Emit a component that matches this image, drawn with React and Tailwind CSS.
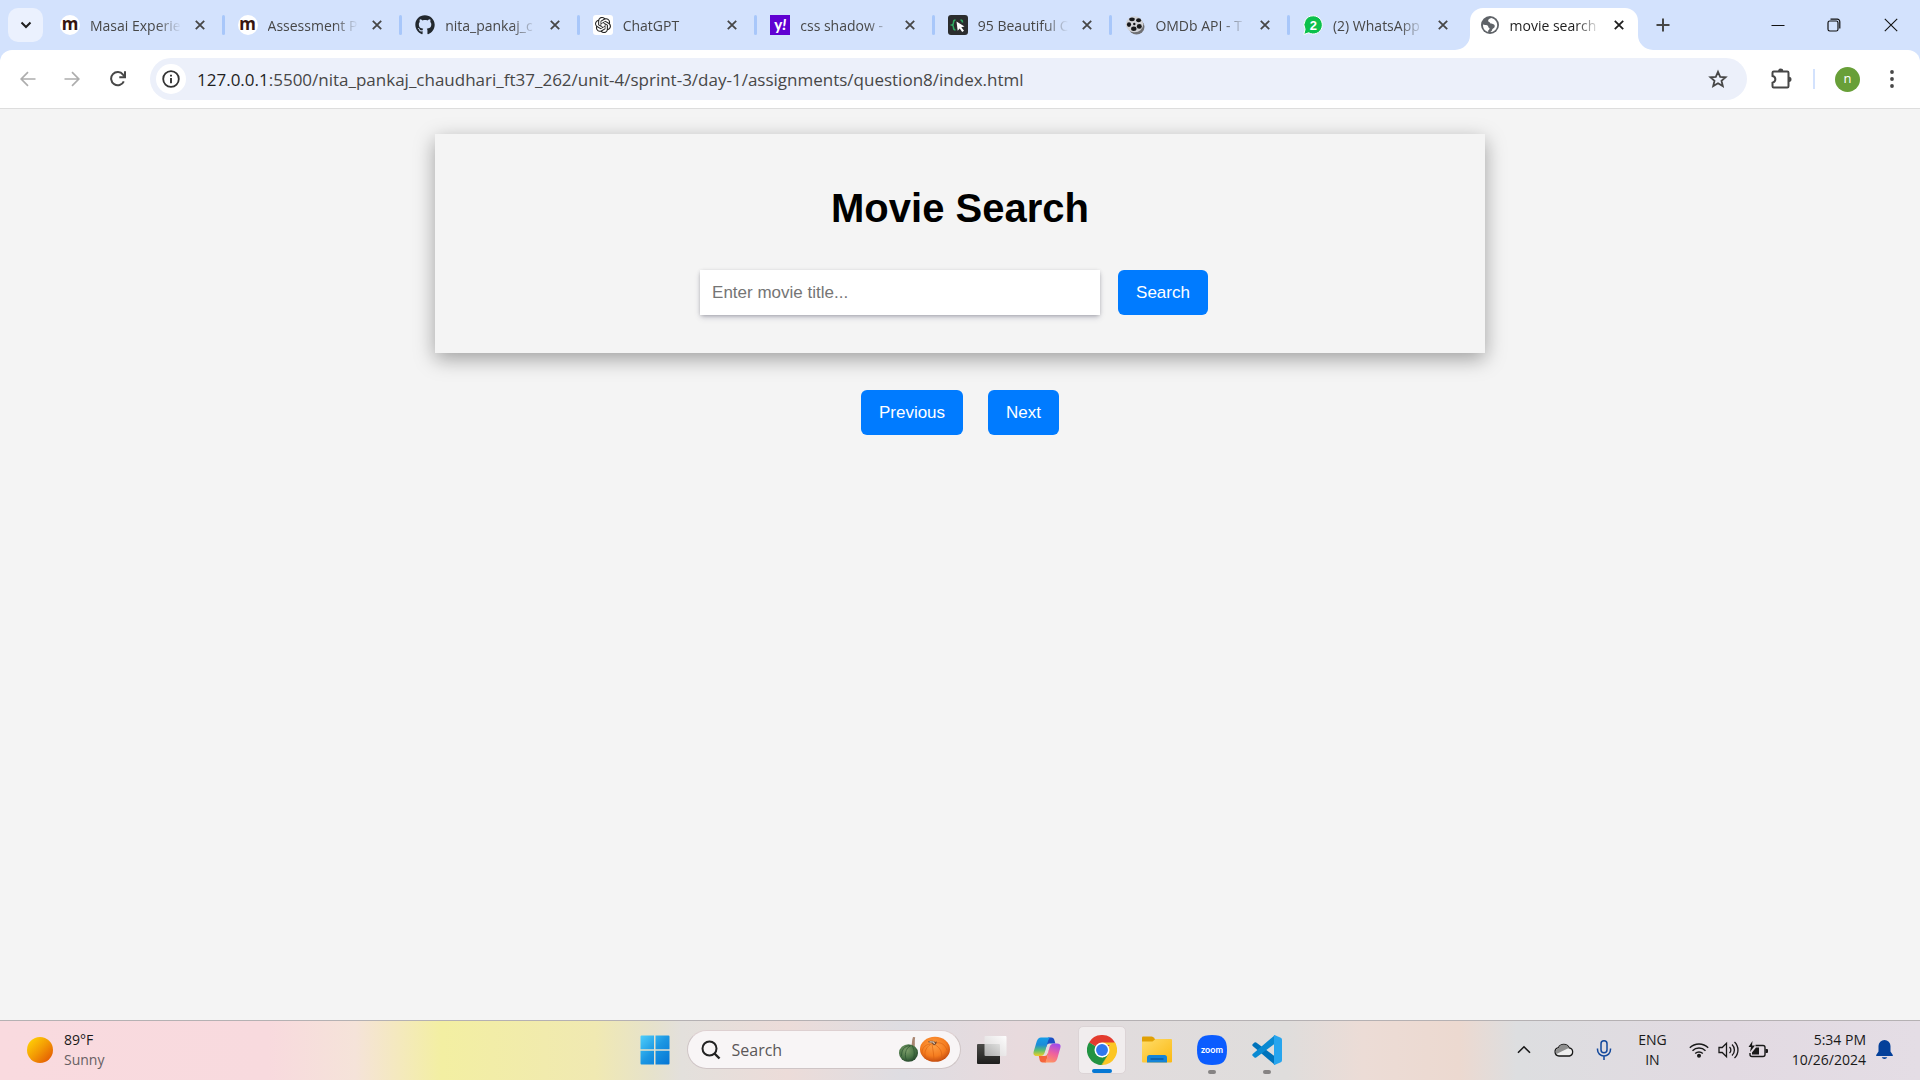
import React from "react";
import { FaGithub } from "react-icons/fa";
import { SiOpenai } from "react-icons/si";

function MasaiIcon() {
  return (
    <span className="flex h-5 w-5 items-center justify-center rounded-full bg-white font-['Noto_Sans',sans-serif] text-[17px] leading-[14px] font-bold text-[#36150f]">
      <span className="pb-[3px]">m</span>
    </span>
  );
}

function YahooIcon() {
  return (
    <span className="flex h-5 w-5 items-center justify-center bg-[#6001d2] font-['Lato',sans-serif] text-[15px] leading-5 font-black text-white">
      <span className="pb-0.5">y<i>!</i></span>
    </span>
  );
}

function BracesIcon() {
  return (
    <svg viewBox="0 0 20 20" className="h-5 w-5">
      <rect width="20" height="20" rx="3" fill="#2b2d2e" />
      <path d="M7.500 5C5.500 5 5.500 6 5.500 7.500S5.500 9.500 4 10c1.500.500 1.500 1 1.500 2.500S5.500 15 7.500 15M12.500 5c2 0 2 1 2 2.500" fill="none" stroke="#2fae62" strokeWidth="1.500" />
      <path d="M8.500 6.500l8 5-3.200.8 2.700 3.500-1.800 1.200-2.500-3.500-2 2.300z" fill="#fff" />
    </svg>
  );
}

function ReelIcon() {
  return (
    <svg viewBox="0 0 20 20" className="h-5 w-5">
      <ellipse cx="11.500" cy="11.800" rx="8" ry="7.600" fill="#6f7074" />
      <ellipse cx="9.500" cy="9.300" rx="8.800" ry="8" fill="#d2d3d7" />
      <g fill="#17181a">
        <ellipse cx="7" cy="4.300" rx="2.800" ry="1.900" />
        <ellipse cx="13.600" cy="5.300" rx="2.500" ry="2" />
        <ellipse cx="4" cy="9.600" rx="2.100" ry="2.400" />
        <ellipse cx="14.300" cy="11.400" rx="2.500" ry="2.400" />
        <ellipse cx="8.800" cy="13.800" rx="2.700" ry="2.200" />
        <circle cx="9.300" cy="9" r="1.200" />
      </g>
    </svg>
  );
}

function WhatsAppIcon() {
  return (
    <svg viewBox="0 0 20 20" className="h-5 w-5">
      <path d="M10.300.8a9.100 9.100 0 1 1-4.600 17L.8 19.500l1.300-5.200A9.100 9.100 0 0 1 10.300.8z" fill="#0bc04c" stroke="#fff" strokeWidth="1" />
      <text x="10.300" y="14.800" textAnchor="middle" fontFamily="Liberation Sans, sans-serif" fontWeight="700" fontSize="13" fill="#fff">2</text>
    </svg>
  );
}

function GlobeIcon() {
  return (
    <svg viewBox="0 0 20 20" className="h-5 w-5">
      <circle cx="10" cy="10" r="9" fill="#5f6368" />
      <path d="M11.500 3c-2.500.500-3.500 1.600-3.300 2.900.2 1.200 1.800.8 2 2.100.2 1 1.700.6 2.700.9 1.800.5 2.200 2 1.600 3.300-.7 1.400-2.300 1.300-2.500 2.700-.2 1-.8 1.800-2 2.100 3.900.4 7.200-2.700 7.200-7 0-3.300-2.300-6-5.700-7zM3 9.500c1.200.6 3 .2 4.500 1 1 .6.500 2 1.500 2.300.9.300.8 1.600-.2 2.100-.7.300-.7 1.200-.6 2C5 16.200 2.800 13.500 3 9.500z" fill="#fff" />
    </svg>
  );
}

function GithubIcon() {
  return <FaGithub className="h-5 w-5 text-[#22282e]" />;
}

function ChatIcon() {
  return (
    <span className="flex h-5 w-5 items-center justify-center rounded-[3px] bg-white">
      <SiOpenai className="h-4 w-4 text-[#222]" />
    </span>
  );
}

const tabs = [
  { title: "Masai Experie", Icon: MasaiIcon },
  { title: "Assessment P", Icon: MasaiIcon },
  { title: "nita_pankaj_c", Icon: GithubIcon },
  { title: "ChatGPT", Icon: ChatIcon },
  { title: "css shadow -", Icon: YahooIcon },
  { title: "95 Beautiful C", Icon: BracesIcon },
  { title: "OMDb API - T", Icon: ReelIcon },
  { title: "(2) WhatsApp", Icon: WhatsAppIcon, last: true },
  { title: "movie search", Icon: GlobeIcon, active: true },
];

function Cross({ className }) {
  return (
    <svg viewBox="0 0 10 10" className={className} fill="none" stroke="currentColor" strokeWidth="1.800">
      <path d="M.8.800l8.400 8.400M9.200.800L.8 9.200" />
    </svg>
  );
}

function Tab({ title, Icon, active, last }) {
  return (
    <div className="relative flex h-full min-w-0 flex-1 items-center pt-2 pb-2">
      {active && (
        <div className="absolute top-2 right-[7px] bottom-0 left-0.5 rounded-t-[13px] bg-white">
          <svg viewBox="0 0 15 15" className="absolute bottom-0 -left-[15px] h-[15px] w-[15px]">
            <path d="M15 0v15H0A15 15 0 0 0 15 0z" fill="#fff" />
          </svg>
          <svg viewBox="0 0 15 15" className="absolute -right-[15px] bottom-0 h-[15px] w-[15px]">
            <path d="M0 0v15h15A15 15 0 0 1 0 0z" fill="#fff" />
          </svg>
        </div>
      )}
      <a href="#" className={`relative flex min-w-0 flex-1 items-center gap-[10px] ${active ? "ml-3 text-[#1f1f1f]" : "ml-[13px] text-[#474747]"}`}>
        <span className="shrink-0"><Icon /></span>
        <span className="flex-1 overflow-hidden pt-0.5 text-[14px] leading-6 whitespace-nowrap [mask-image:linear-gradient(to_right,black_72%,transparent_98%)]">
          {title}
        </span>
      </a>
      <button aria-label={`Close ${title}`} className={`relative ml-2 flex h-[18px] w-[18px] shrink-0 items-center justify-center ${active ? "mr-[14px] text-[#1f1f1f]" : "mr-[13px] text-[#474747]"}`}>
        <Cross className="h-[10px] w-[10px]" />
      </button>
      <span className={`h-5 w-[3px] shrink-0 rounded-full ${active || last ? "" : "bg-[#a8c7fa]"}`} />
    </div>
  );
}

function TabStrip() {
  return (
    <div className="flex h-[50px] items-center bg-[#d3e2fd]">
      <button aria-label="Search tabs" className="mr-1 ml-2 flex h-[34px] w-[35px] shrink-0 items-center justify-center rounded-[10px] bg-[#ebf1fe]">
        <svg viewBox="0 0 12 8" className="h-2 w-3" fill="none" stroke="#1f1f1f" strokeWidth="2">
          <path d="M1.500 1.500L6 6l4.500-4.500" />
        </svg>
      </button>
      <nav className="flex h-full max-w-[1598px] min-w-0 flex-1">
        {tabs.map((t, i) => <Tab key={i} {...t} />)}
      </nav>
      <button aria-label="New tab" className="ml-1 flex h-7 w-7 shrink-0 items-center justify-center text-[#474747]">
        <svg viewBox="0 0 14 14" className="h-[14px] w-[14px]" stroke="currentColor" strokeWidth="2">
          <path d="M7 .5v13M.5 7h13" />
        </svg>
      </button>
      <div className="ml-auto flex shrink-0 items-center">
        <button aria-label="Minimize" className="flex h-10 w-14 items-center justify-center">
          <svg viewBox="0 0 14 14" className="h-[14px] w-[14px]" stroke="#111" strokeWidth="1"><path d="M.5 7.500h13" /></svg>
        </button>
        <button aria-label="Restore" className="flex h-10 w-14 items-center justify-center">
          <svg viewBox="0 0 14 14" className="h-[14px] w-[14px]" fill="none" stroke="#111" strokeWidth="1.200">
            <rect x="1" y="3" width="10" height="10" rx="1.800" />
            <path d="M3.500 1.200h6.800a2.500 2.500 0 0 1 2.500 2.500v6.800" />
          </svg>
        </button>
        <button aria-label="Close window" className="flex h-10 w-[58px] items-center justify-center">
          <svg viewBox="0 0 14 14" className="h-[14px] w-[14px]" stroke="#111" strokeWidth="1.100"><path d="M.8.800l12.400 12.400M13.200.800L.8 13.200" /></svg>
        </button>
      </div>
    </div>
  );
}

function Toolbar() {
  return (
    <div className="bg-[#d3e2fd]">
      <div className="flex h-[59px] items-center rounded-t-[12px] border-b border-[#dddddd] bg-white">
        <button aria-label="Back" className="ml-[10px] flex h-9 w-9 shrink-0 items-center justify-center">
          <svg viewBox="0 0 16 16" className="h-4 w-4" fill="none" stroke="#adadad" strokeWidth="1.700"><path d="M15.500 8H1.500M8 1.200L1.200 8 8 14.800" /></svg>
        </button>
        <button aria-label="Forward" className="ml-2 flex h-9 w-9 shrink-0 items-center justify-center">
          <svg viewBox="0 0 16 16" className="h-4 w-4" fill="none" stroke="#adadad" strokeWidth="1.700"><path d="M.5 8h14M8 1.200L14.800 8 8 14.800" /></svg>
        </button>
        <button aria-label="Reload" className="ml-[10px] flex h-9 w-9 shrink-0 items-center justify-center">
          <svg viewBox="0 0 16 16" className="h-4 w-4" fill="none" stroke="#474747" strokeWidth="2">
            <path d="M13.800 10.300A6.600 6.600 0 1 1 13 3.700l2 2.300" />
            <path d="M15 .3v5.900H9.300" />
          </svg>
        </button>
        <div className="ml-[14px] flex h-[42px] min-w-0 flex-1 items-center rounded-full bg-[#ecf0fa]">
          <button aria-label="Site information" className="ml-1.5 flex h-[30px] w-[30px] shrink-0 items-center justify-center rounded-full bg-white">
            <svg viewBox="0 0 18 18" className="h-[18px] w-[18px]" fill="none" stroke="#333" strokeWidth="1.800">
              <circle cx="9" cy="9" r="7.800" />
              <path d="M9 8v5.200M9 4.700v1.900" strokeWidth="1.900" />
            </svg>
          </button>
          <p className="ml-[11px] min-w-0 flex-1 overflow-hidden pt-0.5 text-[17px] leading-6 whitespace-nowrap text-[#474747]">
            <span className="text-[#1f1f1f]">127.0.0.1</span>:5500/nita_pankaj_chaudhari_ft37_262/unit-4/sprint-3/day-1/assignments/question8/index.html
          </p>
          <button aria-label="Bookmark this tab" className="mr-[17px] flex h-6 w-6 shrink-0 items-center justify-center">
            <svg viewBox="0 0 20 20" className="h-5 w-5" fill="none" stroke="#474747" strokeWidth="1.800">
              <path d="M10 2.800l2.200 5 5.400.5-4.100 3.500 1.300 5.300-4.800-2.900-4.800 2.900 1.300-5.300-4.100-3.500 5.400-.5z" />
            </svg>
          </button>
        </div>
        <button aria-label="Extensions" className="ml-[22px] flex h-6 w-6 shrink-0 items-center justify-center">
          <svg viewBox="0 0 22 22" className="h-[22px] w-[22px]">
            <path d="M3.700 3.500h13.600q1.200 0 1.200 1.200v13.600q0 1.200-1.200 1.200H3.700q-1.200 0-1.200-1.200v-3.600c3.800-1 3.800-5.700 0-6.700V4.700q0-1.200 1.200-1.200z" fill="none" stroke="#474747" strokeWidth="2" />
            <path d="M8 3a2.600 2.400 0 0 1 5.200 0zM19 8.700a2.500 2.600 0 0 1 0 5.200z" fill="#474747" />
          </svg>
        </button>
        <span className="mx-5 h-5 w-0.5 shrink-0 bg-[#d3e2fd]" />
        <button aria-label="Profile" className="flex h-[25px] w-[25px] shrink-0 items-center justify-center rounded-full bg-[#689f38] pb-0.5 text-[13px] leading-4 text-white">n</button>
        <button aria-label="Menu" className="mr-4 ml-5 flex h-6 w-6 shrink-0 items-center justify-center">
          <svg viewBox="0 0 4 18" className="h-[18px] w-1" fill="#474747">
            <circle cx="2" cy="2" r="1.900" /><circle cx="2" cy="9" r="1.900" /><circle cx="2" cy="16" r="1.900" />
          </svg>
        </button>
      </div>
    </div>
  );
}

function ActionButton({ children, type = "button" }) {
  return (
    <button type={type} className="h-[45px] rounded-[6px] bg-[#007bff] px-[18px] text-[17px] leading-5 text-white">
      {children}
    </button>
  );
}

function MoviePage() {
  return (
    <main className="flex-1 bg-[#f4f4f4] pt-[25px] font-['Liberation_Sans',Arial,sans-serif]">
      <section className="mx-auto max-w-[1050px] px-6 pt-[51px] pb-[38px] shadow-[0_6px_19px_rgba(0,0,0,0.35)]">
        <h1 className="text-center text-[40px] leading-[46px] font-bold text-black">Movie Search</h1>
        <form className="mt-[39px] mr-3 flex items-center justify-center gap-[18px]" onSubmit={(e) => e.preventDefault()}>
          <input
            type="text"
            aria-label="Movie title"
            placeholder="Enter movie title..."
            className="h-[45px] w-[400px] bg-white px-3 text-[17px] leading-5 text-black shadow-[0_3px_6px_-1px_rgba(50,50,93,0.25),0_1px_4px_-1px_rgba(0,0,0,0.3)] outline-none placeholder:text-[#757575]"
          />
          <ActionButton type="submit">Search</ActionButton>
        </form>
      </section>
      <div className="mt-[37px] flex justify-center gap-[25px]">
        <ActionButton>Previous</ActionButton>
        <ActionButton>Next</ActionButton>
      </div>
    </main>
  );
}

function WindowsLogo() {
  return (
    <svg viewBox="0 0 30 30" className="h-[30px] w-[30px]">
      <defs>
        <linearGradient id="win" x1="0" y1="0" x2="30" y2="30" gradientUnits="userSpaceOnUse">
          <stop offset="0" stopColor="#4fd0fb" /><stop offset=".5" stopColor="#1b96e2" /><stop offset="1" stopColor="#0474d4" />
        </linearGradient>
      </defs>
      <path d="M1.500.5H14v13.700H.5V1.500q0-1 1-1zM15.500.5h13q1 0 1 1v12.700h-14zM.5 15.700H14v13.800H1.500q-1 0-1-1zM15.500 15.700h14v12.800q0 1-1 1h-13z" fill="url(#win)" />
    </svg>
  );
}

function Pumpkins() {
  return (
    <svg viewBox="0 0 52 28" className="h-7 w-[52px]">
      <defs>
        <radialGradient id="green" cx=".4" cy=".35" r=".7"><stop offset="0" stopColor="#7fa06c" /><stop offset=".6" stopColor="#4a7446" /><stop offset="1" stopColor="#24432a" /></radialGradient>
        <radialGradient id="orange" cx=".45" cy=".35" r=".7"><stop offset="0" stopColor="#ffa145" /><stop offset=".6" stopColor="#f57c1f" /><stop offset="1" stopColor="#bb420b" /></radialGradient>
      </defs>
      <path d="M13 10.500c1.500-3 .5-6 2-9.500l2.200.3c-.8 3.500 0 6.500-.5 9.700z" fill="#a98672" />
      <ellipse cx="10.500" cy="17" rx="9.500" ry="8.800" fill="url(#green)" />
      <path d="M13 9.500c-6 3-7 10-4 16M14 9.500c3 5 3 11 0 15.500M12 9.500C6 10 3.500 14 3.500 20" fill="none" stroke="#2b5230" strokeWidth=".7" />
      <ellipse cx="37" cy="13.300" rx="15" ry="12.500" fill="url(#orange)" />
      <path d="M33 8c-6 4-8 10-4 16M34 8c1 6 2 12 2 17.500M36 8c7 4 9 9 7 16M32 8c-6 1-8 5-8 9M38 7c6-1 9 2 11 7" fill="none" stroke="#d9600f" strokeWidth=".6" />
      <path d="M30 6c2-2 6-1 7 0l2-.5-1 2.500-2 1.500-2-2z" fill="#75472b" /><path d="M31.500 5.800l4 .2 1 2" stroke="#e2cfba" strokeWidth="1.200" fill="none" />
    </svg>
  );
}

function TaskViewIcon() {
  return (
    <svg viewBox="0 0 30 28" className="h-7 w-[30px]">
      <defs>
        <linearGradient id="dark" x1="0" y1="0" x2="0" y2="1"><stop offset="0" stopColor="#4b4b48" /><stop offset="1" stopColor="#1e1e1d" /></linearGradient>
        <linearGradient id="light" x1="1" y1="0" x2="0" y2="1"><stop offset="0" stopColor="#fff" stopOpacity=".95" /><stop offset="1" stopColor="#d8d8d8" stopOpacity=".75" /></linearGradient>
      </defs>
      <rect x="0" y="8" width="23" height="20" rx="1" fill="url(#dark)" />
      <rect x="7.500" y="0" width="22" height="20" rx="1" fill="url(#light)" />
    </svg>
  );
}

function CopilotIcon() {
  return (
    <svg viewBox="0 0 28 26" className="h-[26px] w-7">
      <defs>
        <linearGradient id="cpa" x1="0" y1="0" x2="0" y2="1"><stop offset="0" stopColor="#159de8" /><stop offset=".4" stopColor="#1c8cd8" /><stop offset=".7" stopColor="#5fbf6e" /><stop offset="1" stopColor="#f2cf25" /></linearGradient>
        <linearGradient id="cpb" x1=".6" y1="0" x2=".3" y2="1"><stop offset="0" stopColor="#a44be8" /><stop offset=".5" stopColor="#f0629d" /><stop offset="1" stopColor="#ff9560" /></linearGradient>
      </defs>
      <path d="M15 .5h3.500q2 0 2.700 2l1.200 4h-6q-2 0-2.700 2l-2 6z" fill="#1c4fc4" />
      <path d="M13 25.500H9.500q-2 0-2.700-2l-1-4.500h6q2 0 2.700-2l2-6z" fill="#f5653b" />
      <path d="M8 .5h10q-2 0-2.800 3l-3.500 12q-1 3.500-4.500 3.500H4q-4.500 0-3.300-4.500l3-10Q5 .5 8 .5z" fill="url(#cpa)" />
      <path d="M20 25.500H11q1.800 0 2.600-3l3-12.500q1-3.500 4.500-3.500H24q4.500 0 3.300 4.500l-3 10.500q-1.200 4-4.300 4z" fill="url(#cpb)" />
    </svg>
  );
}

function ChromeIcon() {
  return (
    <svg viewBox="0 0 48 48" className="h-[30px] w-[30px]">
      <path d="M24 24L3.200 12A24 24 0 0 1 44.800 12z" fill="#e33b2e" />
      <path d="M24 24L44.800 12A24 24 0 0 1 24 48z" fill="#fcc624" />
      <path d="M24 24L24 48A24 24 0 0 1 3.200 12z" fill="#229342" />
      <path d="M24 12h20.800a24 24 0 0 1 1.700 4H30z" fill="#fcc624" />
      <path d="M13.600 30L3.200 12l10 7z" fill="#229342" />
      <path d="M34.400 30L24 48a24 24 0 0 1-6-.8L26 34z" fill="#229342" />
      <path d="M34.400 30L24 48h-1z" fill="#fcc624" />
      <circle cx="24" cy="24" r="12" fill="#fff" />
      <circle cx="24" cy="24" r="9.500" fill="#3078ed" />
    </svg>
  );
}

function FolderIcon() {
  return (
    <svg viewBox="0 0 30 27" className="h-[27px] w-[30px]">
      <defs>
        <linearGradient id="fold" x1="0" y1="0" x2="1" y2="1"><stop offset="0" stopColor="#ffdc69" /><stop offset="1" stopColor="#fbb912" /></linearGradient>
      </defs>
      <path d="M0 1.500Q0 .500 1 .500h8.500q1 0 1.800.8L13.500 3.500v4H0z" fill="#e0a004" />
      <path d="M0 5.500h10.500l3-2.500H29q1 0 1 1v21.500q0 1-1 1H1q-1 0-1-1z" fill="url(#fold)" />
      <path d="M5 26.500v-5q0-2.500 2.500-2.500h15q2.500 0 2.500 2.500v5z" fill="#1484d8" />
      <path d="M8.500 23h13" stroke="#0b4f94" strokeWidth="1.200" />
    </svg>
  );
}

function ZoomIcon() {
  return (
    <svg viewBox="0 0 30 30" className="h-[30px] w-[30px]">
      <path d="M15 0C26 0 30 4 30 15S26 30 15 30 0 26 0 15 4 0 15 0z" fill="#0b5cff" />
      <text x="15" y="18" textAnchor="middle" fontFamily="Lato, sans-serif" fontWeight="700" fontSize="9" fill="#fff">zoom</text>
    </svg>
  );
}

function CodeIcon() {
  return (
    <svg viewBox="0 0 30 30" className="h-[30px] w-[30px]">
      <path d="M.6 9.300L2.500 7.500q.8-.6 1.700 0L23 21.500V30L.7 11q-.8-.8-.1-1.700z" fill="#0073bb" />
      <path d="M.6 20.700l1.900 1.800q.8.600 1.700 0L23 8.500V0L.7 19q-.8.800-.1 1.700z" fill="#0a8ad2" />
      <path d="M22.500 0l6.300 2.800Q30 3.400 30 4.800v20.400q0 1.400-1.200 2l-6.300 2.800q-1.200-.5-.5-1.500V1.500q-.7-1 .5-1.500z" fill="#27a5ee" />
    </svg>
  );
}

function TaskbarApp({ label, children, state }) {
  return (
    <button
      aria-label={label}
      className={`relative flex h-12 w-12 shrink-0 items-center justify-center rounded-[5px] ${state === "active" ? "border border-[#dcd4d6] bg-[#f1edee]" : ""}`}
    >
      {children}
      {state === "active" && <span className="absolute bottom-0 left-1/2 h-1 w-5 -translate-x-1/2 rounded-full bg-[#0578d4]" />}
      {state === "open" && <span className="absolute bottom-0 left-1/2 h-1 w-2 -translate-x-1/2 rounded-full bg-[#868383]" />}
    </button>
  );
}

function Tray() {
  return (
    <div className="flex flex-1 items-center justify-end pr-[27px] text-[14px] leading-5 text-[#191919]">
      <button aria-label="Show hidden icons" className="mr-[22px] flex h-6 w-4 items-center justify-center">
        <svg viewBox="0 0 14 9" className="h-[9px] w-[14px]" fill="none" stroke="#191919" strokeWidth="1.600"><path d="M1 7.800l6-6 6 6" /></svg>
      </button>
      <button aria-label="Cloud storage" className="mr-[22px]">
        <svg viewBox="0 0 20 14" className="h-[14px] w-5">
          <path d="M5 13a4.200 4.200 0 0 1-.6-8.300A6 6 0 0 1 15.200 4.800 4.200 4.200 0 0 1 15.500 13z" fill="#eee" stroke="#191919" strokeWidth="1.300" />
          <path d="M4.600 4.900A5.600 5.600 0 0 1 14.800 4.900L8 8.300l-5.500 2.800A4 4 0 0 1 4.600 4.900z" fill="#8f8f8f" />
        </svg>
      </button>
      <button aria-label="Microphone" className="mr-[26px]">
        <svg viewBox="0 0 16 20" className="h-5 w-4" fill="none" stroke="#12489c" strokeWidth="1.500">
          <rect x="5" y=".8" width="6" height="12" rx="3" /><path d="M1.500 8.500v1a6.500 6.500 0 0 0 13 0v-1M8 16v4" />
        </svg>
      </button>
      <button className="mr-[22px] text-center">ENG<br />IN</button>
      <button aria-label="Network, sound and battery" className="mr-6 flex items-center gap-[9px]">
        <svg viewBox="0 0 20 16" className="h-4 w-5" fill="none" stroke="#191919" strokeWidth="1.400">
          <path d="M.8 5.800a13 13 0 0 1 18.400 0M3.500 8.700a9.200 9.200 0 0 1 13 0M6.200 11.500a5.400 5.400 0 0 1 7.600 0" /><circle cx="10" cy="13.800" r="1.300" fill="#191919" />
        </svg>
        <svg viewBox="0 0 21 18" className="h-[18px] w-[21px]" fill="none" stroke="#191919" strokeWidth="1.300">
          <path d="M1 6.500h3.200L8.500 2.200v13.600L4.200 11.500H1zM11.500 6a4 4 0 0 1 0 6M14 3.500a7.500 7.500 0 0 1 0 11M16.500 1a11 11 0 0 1 0 16" />
        </svg>
        <svg viewBox="0 0 20 17" className="h-[17px] w-5">
          <path d="M7.500 4.500H15a2 2 0 0 1 2 2v7a2 2 0 0 1-2 2H4a2 2 0 0 1-2-2V12" fill="none" stroke="#191919" strokeWidth="1.400" />
          <path d="M7.500 6.500H11v7H4v-2l4-5zM17.500 8H19q1 0 1 1v2q0 1-1 1h-1.500zM4.500 0L.5 6H3l-1 5 5-6.500H4z" fill="#191919" />
        </svg>
      </button>
      <button className="mr-[10px] text-right">5:34 PM<br />10/26/2024</button>
      <button aria-label="Notifications">
        <svg viewBox="0 0 17 20" className="h-5 w-[17px]" fill="#04409a">
          <path d="M8.500 0a6 6 0 0 1 6 6v5.500l2.300 3.500v1H.2v-1l2.300-3.500V6a6 6 0 0 1 6-6zM5.800 17.300h5.400a2.800 2.400 0 0 1-5.400 0z" />
        </svg>
      </button>
    </div>
  );
}

function Taskbar() {
  return (
    <footer className="flex h-[60px] items-center border-t border-[#b5b1b3] bg-[linear-gradient(to_right,#f9dadf_0%,#f8dade_14%,#f5e3d9_18.5%,#f3efa2_23%,#f0e9b2_31%,#e6e2cc_34%,#e3e0dc_35.500%,#ecdcd9_41%,#dedde2_47%,#e8dadd_53%,#e1dcdd_58%,#dfdddc_67%,#ecdcd6_71%,#ecd9d0_76%,#dddee0_79%,#e2dae2_90%,#e4dde5_100%)] pb-0.5">
      <div className="flex flex-1 items-center gap-[11px] pl-[27px] text-[14px] leading-5 text-[#191919]">
        <span className="h-[26px] w-[26px] rounded-full bg-[linear-gradient(135deg,#ffcf05_10%,#f39a04_50%,#e25303_95%)]" />
        <p>89°F<br /><span className="text-[#676063]">Sunny</span></p>
      </div>
      <div className="flex shrink-0 items-center gap-[7px]">
        <button aria-label="Start" className="flex h-12 w-[50px] items-center justify-center"><WindowsLogo /></button>
        <label className="flex h-[39px] w-[274px] items-center rounded-full border border-[#cfc5c6] border-t-[#ded0d1] bg-[#f8f5f6] pr-[10px] pl-[13px]">
          <svg viewBox="0 0 20 20" className="h-5 w-5 shrink-0" fill="none" stroke="#222" strokeWidth="2"><circle cx="8.500" cy="8.500" r="7" /><path d="M13.500 13.500l5 5" strokeWidth="2.400" /></svg>
          <input type="text" aria-label="Search" placeholder="Search" className="ml-[11px] min-w-0 flex-1 bg-transparent text-[16px] leading-6 outline-none placeholder:text-[#5b5758]" />
          <Pumpkins />
        </label>
        <TaskbarApp label="Task view"><TaskViewIcon /></TaskbarApp>
        <TaskbarApp label="Copilot"><CopilotIcon /></TaskbarApp>
        <TaskbarApp label="Chrome" state="active"><ChromeIcon /></TaskbarApp>
        <TaskbarApp label="File Explorer"><FolderIcon /></TaskbarApp>
        <TaskbarApp label="Zoom" state="open"><ZoomIcon /></TaskbarApp>
        <TaskbarApp label="Visual Studio Code" state="open"><CodeIcon /></TaskbarApp>
      </div>
      <Tray />
    </footer>
  );
}

export default function App() {
  return (
    <div className="flex min-h-screen flex-col font-['Open_Sans','Noto_Sans',sans-serif]">
      <TabStrip />
      <Toolbar />
      <MoviePage />
      <Taskbar />
    </div>
  );
}
